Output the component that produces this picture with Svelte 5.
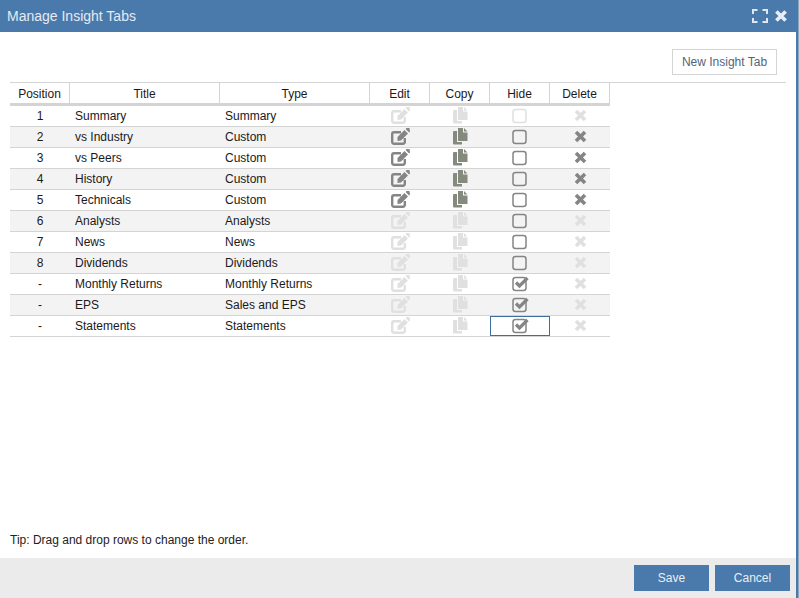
<script lang="ts">
  type Tab = { pos: string; title: string; type: string; custom?: boolean; hidden?: boolean; hideOff?: boolean; focus?: boolean };

  const tabs: Tab[] = [
    { pos: '1', title: 'Summary', type: 'Summary', hideOff: true },
    { pos: '2', title: 'vs Industry', type: 'Custom', custom: true },
    { pos: '3', title: 'vs Peers', type: 'Custom', custom: true },
    { pos: '4', title: 'History', type: 'Custom', custom: true },
    { pos: '5', title: 'Technicals', type: 'Custom', custom: true },
    { pos: '6', title: 'Analysts', type: 'Analysts' },
    { pos: '7', title: 'News', type: 'News' },
    { pos: '8', title: 'Dividends', type: 'Dividends' },
    { pos: '-', title: 'Monthly Returns', type: 'Monthly Returns', hidden: true },
    { pos: '-', title: 'EPS', type: 'Sales and EPS', hidden: true },
    { pos: '-', title: 'Statements', type: 'Statements', hidden: true, focus: true }
  ];
</script>

<div class="dialog">
  <header class="titlebar">
    <span class="heading">Manage Insight Tabs</span>
    <span class="window-btns">
      <svg width="16" height="14" viewBox="0 0 16 14" aria-hidden="true">
        <path d="M1 5V1H5.5M10.5 1H15V5M15 9V13H10.5M5.5 13H1V9" fill="none" stroke="#dfe8f2" stroke-width="2" />
      </svg>
      <svg width="14" height="14" viewBox="0 0 14 14" aria-hidden="true">
        <path d="M2.4 2.4L11.6 11.6M11.6 2.4L2.4 11.6" fill="none" stroke="#e8eef5" stroke-width="3.6" />
      </svg>
    </span>
  </header>

  <main class="body">
    <div class="toolbar">
      <button class="new-tab">New Insight Tab</button>
    </div>

    <div class="grid-head">
      <span>Position</span>
      <span>Title</span>
      <span>Type</span>
      <span>Edit</span>
      <span>Copy</span>
      <span>Hide</span>
      <span>Delete</span>
    </div>

    <div class="rows">
      {#each tabs as tab, i}
        <div class="row" class:alt={i % 2 === 1}>
          <span class="c-pos">{tab.pos}</span>
          <span class="c-title">{tab.title}</span>
          <span class="c-type">{tab.type}</span>
          <span class="c-act edit" class:off={!tab.custom}>
            <svg width="19" height="17" viewBox="0 0 19 17" aria-hidden="true">
              <path d="M10 4.2H3A1.8 1.8 0 0 0 1.2 6V14A1.8 1.8 0 0 0 3 15.8H12A1.8 1.8 0 0 0 13.8 14V10" fill="none" stroke="currentColor" stroke-width="2.4" />
              <path d="M6.5 9L13.5 2L17 5.5L10 12.5L6.5 13Z M14.6 .9L15.5 0L18.5 0L19 3.5L18.1 4.4Z" fill="currentColor" />
            </svg>
          </span>
          <span class="c-act copy" class:off={!tab.custom}>
            <svg width="15" height="17" viewBox="0 0 15 17" aria-hidden="true">
              <path d="M5 0H10V4.5H14.5V13H5Z M11 0L14.5 3.5H11Z M4 3V14H9V16.5H1A1 1 0 0 1 0 15.5V4A1 1 0 0 1 1 3Z" fill="currentColor" />
            </svg>
          </span>
          <span class="c-act hide" class:off={tab.hideOff} class:focus={tab.focus}>
            <svg width="18" height="16" viewBox="0 0 18 16" aria-hidden="true">
              <rect x="1" y="1.5" width="13" height="13" rx="2.5" fill="none" stroke="currentColor" stroke-width="1.5" />
              {#if tab.hidden}
                <path d="M4 6.5L7.5 10L15.5 2" fill="none" stroke="currentColor" stroke-width="3.2" />
              {/if}
            </svg>
          </span>
          <span class="c-act remove" class:off={!tab.custom}>
            <svg width="13" height="13" viewBox="0 0 13 13" aria-hidden="true">
              <path d="M2 2L11 11M11 2L2 11" fill="none" stroke="currentColor" stroke-width="3.6" />
            </svg>
          </span>
        </div>
      {/each}
    </div>

    <p class="tip">Tip: Drag and drop rows to change the order.</p>
  </main>

  <footer class="footer">
    <button class="action">Save</button>
    <button class="action">Cancel</button>
  </footer>
</div>

<style>
  :global(body) {
    margin: 0;
    background: #8fa5bb;
  }

  .dialog {
    display: flex;
    flex-direction: column;
    width: 798px;
    height: 598px;
    overflow: hidden;
    box-sizing: border-box;
    border-right: 2px solid #4a7aab;
    background: #fff;
    color: #1a1a1a;
    font-family: "Liberation Sans", Arial, sans-serif;
    font-size: 12px;
  }

  .titlebar {
    display: flex;
    flex: none;
    align-items: center;
    justify-content: space-between;
    height: 32px;
    padding: 0 8px 0 7px;
    box-sizing: border-box;
    background: #4a7aab;
  }

  .heading {
    color: #e4ebf3;
    font-size: 14px;
  }

  .window-btns {
    display: flex;
    align-items: center;
    gap: 6px;
  }

  .window-btns svg {
    display: block;
  }

  .body {
    display: flex;
    flex: 1;
    flex-direction: column;
    min-height: 0;
    padding: 0 0 0 10px;
  }

  .toolbar {
    display: flex;
    justify-content: flex-end;
    height: 50px;
    padding: 17px 19px 0 0;
    box-sizing: border-box;
  }

  .new-tab {
    width: 105px;
    height: 26px;
    padding: 0;
    border: 1px solid #d4d4d4;
    background: #fff;
    color: #54657a;
    font: inherit;
  }

  .grid-head,
  .row {
    display: grid;
    grid-template-columns: 60px 150px 150px 60px 60px 60px 60px;
    align-items: center;
  }

  .grid-head {
    align-items: start;
    width: 776px;
    height: 21px;
    box-sizing: border-box;
    border-top: 1px solid #d4d4d4;
  }

  .grid-head span {
    height: 20px;
    line-height: 23px;
    border-right: 1px solid #d4d4d4;
    box-sizing: border-box;
    text-align: center;
  }

  .rows {
    width: 600px;
    border-top: 3px solid #d4d4d4;
    box-sizing: border-box;
  }

  .row {
    height: 21px;
    border-bottom: 1px solid #d4d4d4;
    box-sizing: border-box;
  }

  .row.alt {
    background: #f3f3f3;
  }

  .c-pos {
    text-align: center;
  }

  .c-title,
  .c-type {
    padding-left: 5px;
  }

  .c-act {
    display: flex;
    align-items: center;
    justify-content: center;
    height: 20px;
    color: #858585;
  }

  .c-act svg {
    display: block;
  }

  .c-act.edit svg,
  .c-act.copy svg,
  .c-act.remove svg {
    margin-bottom: 2px;
  }

  .c-act.edit svg {
    margin-left: 1px;
  }

  .c-act.copy {
    color: #858a7e;
  }

  .c-act.off {
    color: #e0e0e0;
  }

  .c-act.hide svg {
    margin-left: 2px;
  }

  .c-act.focus {
    box-sizing: border-box;
    outline: 1px solid #3e6d9e;
    outline-offset: -1px;
  }

  .tip {
    margin: auto 0 11px;
    color: #222;
  }

  .footer {
    display: flex;
    flex: none;
    justify-content: flex-end;
    gap: 6px;
    height: 40px;
    padding: 7px 6px 0 0;
    box-sizing: border-box;
    background: #ebebeb;
  }

  .action {
    width: 75px;
    height: 26px;
    padding: 0;
    border: 0;
    background: #4a7aab;
    color: #e8eef5;
    font: inherit;
  }
</style>
